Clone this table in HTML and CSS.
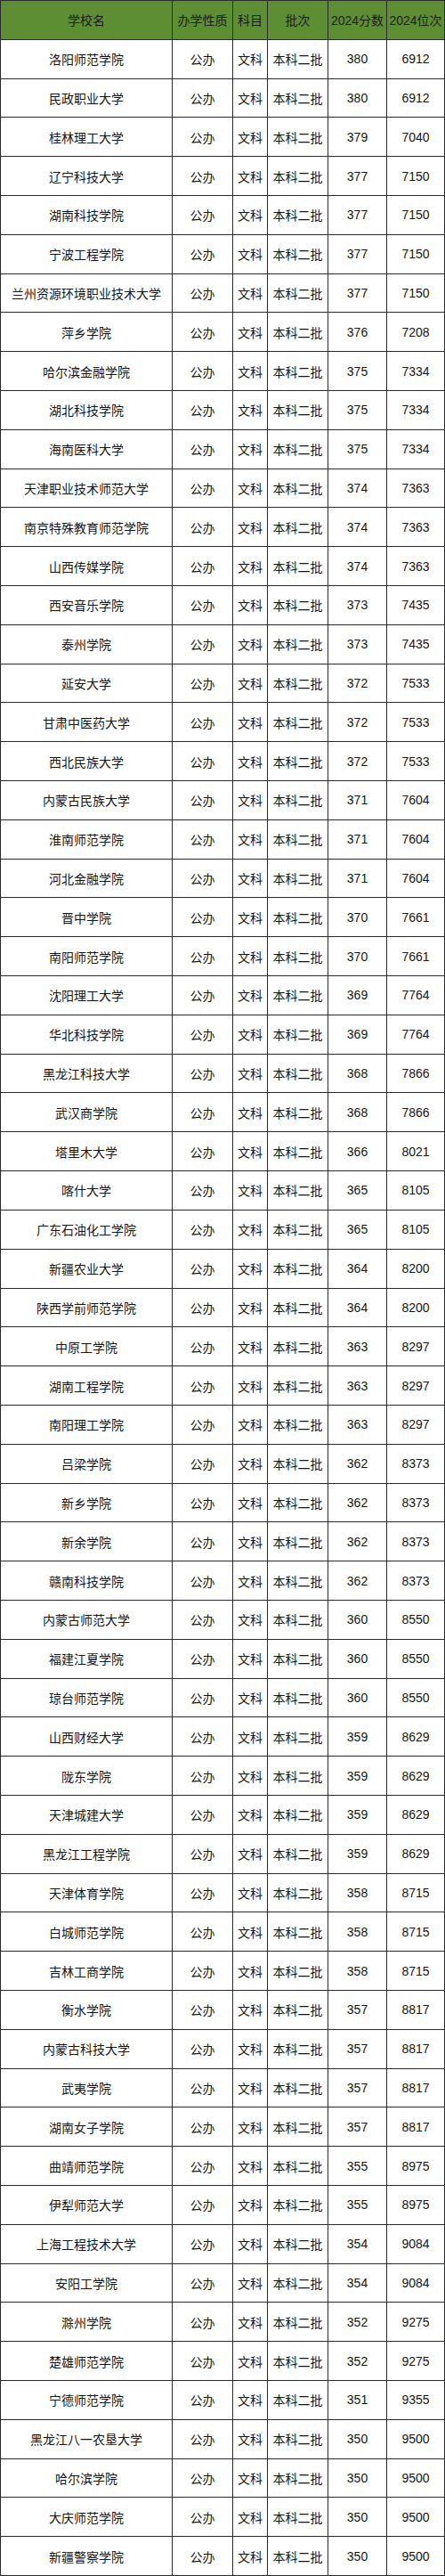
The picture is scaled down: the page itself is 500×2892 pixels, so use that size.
FILE: index.html
```html
<!DOCTYPE html>
<html lang="zh">
<head>
<meta charset="utf-8">
<title>2024 文科 本科二批</title>
<link rel="stylesheet" href="styles.css">
</head>
<body>
<div class="table">
<div class="c h">学校名</div><div class="c h">办学性质</div><div class="c h">科目</div><div class="c h">批次</div><div class="c h">2024分数</div><div class="c h">2024位次</div>
<div class="c">洛阳师范学院</div><div class="c">公办</div><div class="c">文科</div><div class="c">本科二批</div><div class="c n">380</div><div class="c n">6912</div>
<div class="c">民政职业大学</div><div class="c">公办</div><div class="c">文科</div><div class="c">本科二批</div><div class="c n">380</div><div class="c n">6912</div>
<div class="c">桂林理工大学</div><div class="c">公办</div><div class="c">文科</div><div class="c">本科二批</div><div class="c n">379</div><div class="c n">7040</div>
<div class="c">辽宁科技大学</div><div class="c">公办</div><div class="c">文科</div><div class="c">本科二批</div><div class="c n">377</div><div class="c n">7150</div>
<div class="c">湖南科技学院</div><div class="c">公办</div><div class="c">文科</div><div class="c">本科二批</div><div class="c n">377</div><div class="c n">7150</div>
<div class="c">宁波工程学院</div><div class="c">公办</div><div class="c">文科</div><div class="c">本科二批</div><div class="c n">377</div><div class="c n">7150</div>
<div class="c">兰州资源环境职业技术大学</div><div class="c">公办</div><div class="c">文科</div><div class="c">本科二批</div><div class="c n">377</div><div class="c n">7150</div>
<div class="c">萍乡学院</div><div class="c">公办</div><div class="c">文科</div><div class="c">本科二批</div><div class="c n">376</div><div class="c n">7208</div>
<div class="c">哈尔滨金融学院</div><div class="c">公办</div><div class="c">文科</div><div class="c">本科二批</div><div class="c n">375</div><div class="c n">7334</div>
<div class="c">湖北科技学院</div><div class="c">公办</div><div class="c">文科</div><div class="c">本科二批</div><div class="c n">375</div><div class="c n">7334</div>
<div class="c">海南医科大学</div><div class="c">公办</div><div class="c">文科</div><div class="c">本科二批</div><div class="c n">375</div><div class="c n">7334</div>
<div class="c">天津职业技术师范大学</div><div class="c">公办</div><div class="c">文科</div><div class="c">本科二批</div><div class="c n">374</div><div class="c n">7363</div>
<div class="c">南京特殊教育师范学院</div><div class="c">公办</div><div class="c">文科</div><div class="c">本科二批</div><div class="c n">374</div><div class="c n">7363</div>
<div class="c">山西传媒学院</div><div class="c">公办</div><div class="c">文科</div><div class="c">本科二批</div><div class="c n">374</div><div class="c n">7363</div>
<div class="c">西安音乐学院</div><div class="c">公办</div><div class="c">文科</div><div class="c">本科二批</div><div class="c n">373</div><div class="c n">7435</div>
<div class="c">泰州学院</div><div class="c">公办</div><div class="c">文科</div><div class="c">本科二批</div><div class="c n">373</div><div class="c n">7435</div>
<div class="c">延安大学</div><div class="c">公办</div><div class="c">文科</div><div class="c">本科二批</div><div class="c n">372</div><div class="c n">7533</div>
<div class="c">甘肃中医药大学</div><div class="c">公办</div><div class="c">文科</div><div class="c">本科二批</div><div class="c n">372</div><div class="c n">7533</div>
<div class="c">西北民族大学</div><div class="c">公办</div><div class="c">文科</div><div class="c">本科二批</div><div class="c n">372</div><div class="c n">7533</div>
<div class="c">内蒙古民族大学</div><div class="c">公办</div><div class="c">文科</div><div class="c">本科二批</div><div class="c n">371</div><div class="c n">7604</div>
<div class="c">淮南师范学院</div><div class="c">公办</div><div class="c">文科</div><div class="c">本科二批</div><div class="c n">371</div><div class="c n">7604</div>
<div class="c">河北金融学院</div><div class="c">公办</div><div class="c">文科</div><div class="c">本科二批</div><div class="c n">371</div><div class="c n">7604</div>
<div class="c">晋中学院</div><div class="c">公办</div><div class="c">文科</div><div class="c">本科二批</div><div class="c n">370</div><div class="c n">7661</div>
<div class="c">南阳师范学院</div><div class="c">公办</div><div class="c">文科</div><div class="c">本科二批</div><div class="c n">370</div><div class="c n">7661</div>
<div class="c">沈阳理工大学</div><div class="c">公办</div><div class="c">文科</div><div class="c">本科二批</div><div class="c n">369</div><div class="c n">7764</div>
<div class="c">华北科技学院</div><div class="c">公办</div><div class="c">文科</div><div class="c">本科二批</div><div class="c n">369</div><div class="c n">7764</div>
<div class="c">黑龙江科技大学</div><div class="c">公办</div><div class="c">文科</div><div class="c">本科二批</div><div class="c n">368</div><div class="c n">7866</div>
<div class="c">武汉商学院</div><div class="c">公办</div><div class="c">文科</div><div class="c">本科二批</div><div class="c n">368</div><div class="c n">7866</div>
<div class="c">塔里木大学</div><div class="c">公办</div><div class="c">文科</div><div class="c">本科二批</div><div class="c n">366</div><div class="c n">8021</div>
<div class="c">喀什大学</div><div class="c">公办</div><div class="c">文科</div><div class="c">本科二批</div><div class="c n">365</div><div class="c n">8105</div>
<div class="c">广东石油化工学院</div><div class="c">公办</div><div class="c">文科</div><div class="c">本科二批</div><div class="c n">365</div><div class="c n">8105</div>
<div class="c">新疆农业大学</div><div class="c">公办</div><div class="c">文科</div><div class="c">本科二批</div><div class="c n">364</div><div class="c n">8200</div>
<div class="c">陕西学前师范学院</div><div class="c">公办</div><div class="c">文科</div><div class="c">本科二批</div><div class="c n">364</div><div class="c n">8200</div>
<div class="c">中原工学院</div><div class="c">公办</div><div class="c">文科</div><div class="c">本科二批</div><div class="c n">363</div><div class="c n">8297</div>
<div class="c">湖南工程学院</div><div class="c">公办</div><div class="c">文科</div><div class="c">本科二批</div><div class="c n">363</div><div class="c n">8297</div>
<div class="c">南阳理工学院</div><div class="c">公办</div><div class="c">文科</div><div class="c">本科二批</div><div class="c n">363</div><div class="c n">8297</div>
<div class="c">吕梁学院</div><div class="c">公办</div><div class="c">文科</div><div class="c">本科二批</div><div class="c n">362</div><div class="c n">8373</div>
<div class="c">新乡学院</div><div class="c">公办</div><div class="c">文科</div><div class="c">本科二批</div><div class="c n">362</div><div class="c n">8373</div>
<div class="c">新余学院</div><div class="c">公办</div><div class="c">文科</div><div class="c">本科二批</div><div class="c n">362</div><div class="c n">8373</div>
<div class="c">赣南科技学院</div><div class="c">公办</div><div class="c">文科</div><div class="c">本科二批</div><div class="c n">362</div><div class="c n">8373</div>
<div class="c">内蒙古师范大学</div><div class="c">公办</div><div class="c">文科</div><div class="c">本科二批</div><div class="c n">360</div><div class="c n">8550</div>
<div class="c">福建江夏学院</div><div class="c">公办</div><div class="c">文科</div><div class="c">本科二批</div><div class="c n">360</div><div class="c n">8550</div>
<div class="c">琼台师范学院</div><div class="c">公办</div><div class="c">文科</div><div class="c">本科二批</div><div class="c n">360</div><div class="c n">8550</div>
<div class="c">山西财经大学</div><div class="c">公办</div><div class="c">文科</div><div class="c">本科二批</div><div class="c n">359</div><div class="c n">8629</div>
<div class="c">陇东学院</div><div class="c">公办</div><div class="c">文科</div><div class="c">本科二批</div><div class="c n">359</div><div class="c n">8629</div>
<div class="c">天津城建大学</div><div class="c">公办</div><div class="c">文科</div><div class="c">本科二批</div><div class="c n">359</div><div class="c n">8629</div>
<div class="c">黑龙江工程学院</div><div class="c">公办</div><div class="c">文科</div><div class="c">本科二批</div><div class="c n">359</div><div class="c n">8629</div>
<div class="c">天津体育学院</div><div class="c">公办</div><div class="c">文科</div><div class="c">本科二批</div><div class="c n">358</div><div class="c n">8715</div>
<div class="c">白城师范学院</div><div class="c">公办</div><div class="c">文科</div><div class="c">本科二批</div><div class="c n">358</div><div class="c n">8715</div>
<div class="c">吉林工商学院</div><div class="c">公办</div><div class="c">文科</div><div class="c">本科二批</div><div class="c n">358</div><div class="c n">8715</div>
<div class="c">衡水学院</div><div class="c">公办</div><div class="c">文科</div><div class="c">本科二批</div><div class="c n">357</div><div class="c n">8817</div>
<div class="c">内蒙古科技大学</div><div class="c">公办</div><div class="c">文科</div><div class="c">本科二批</div><div class="c n">357</div><div class="c n">8817</div>
<div class="c">武夷学院</div><div class="c">公办</div><div class="c">文科</div><div class="c">本科二批</div><div class="c n">357</div><div class="c n">8817</div>
<div class="c">湖南女子学院</div><div class="c">公办</div><div class="c">文科</div><div class="c">本科二批</div><div class="c n">357</div><div class="c n">8817</div>
<div class="c">曲靖师范学院</div><div class="c">公办</div><div class="c">文科</div><div class="c">本科二批</div><div class="c n">355</div><div class="c n">8975</div>
<div class="c">伊犁师范大学</div><div class="c">公办</div><div class="c">文科</div><div class="c">本科二批</div><div class="c n">355</div><div class="c n">8975</div>
<div class="c">上海工程技术大学</div><div class="c">公办</div><div class="c">文科</div><div class="c">本科二批</div><div class="c n">354</div><div class="c n">9084</div>
<div class="c">安阳工学院</div><div class="c">公办</div><div class="c">文科</div><div class="c">本科二批</div><div class="c n">354</div><div class="c n">9084</div>
<div class="c">滁州学院</div><div class="c">公办</div><div class="c">文科</div><div class="c">本科二批</div><div class="c n">352</div><div class="c n">9275</div>
<div class="c">楚雄师范学院</div><div class="c">公办</div><div class="c">文科</div><div class="c">本科二批</div><div class="c n">352</div><div class="c n">9275</div>
<div class="c">宁德师范学院</div><div class="c">公办</div><div class="c">文科</div><div class="c">本科二批</div><div class="c n">351</div><div class="c n">9355</div>
<div class="c">黑龙江八一农垦大学</div><div class="c">公办</div><div class="c">文科</div><div class="c">本科二批</div><div class="c n">350</div><div class="c n">9500</div>
<div class="c">哈尔滨学院</div><div class="c">公办</div><div class="c">文科</div><div class="c">本科二批</div><div class="c n">350</div><div class="c n">9500</div>
<div class="c">大庆师范学院</div><div class="c">公办</div><div class="c">文科</div><div class="c">本科二批</div><div class="c n">350</div><div class="c n">9500</div>
<div class="c">新疆警察学院</div><div class="c">公办</div><div class="c">文科</div><div class="c">本科二批</div><div class="c n">350</div><div class="c n">9500</div>
</div>
</body>
</html>
```
FILE: styles.css
```css
html, body {
  margin: 0;
  padding: 0;
  background: #ffffff;
}

.table {
  box-sizing: border-box;
  width: 500px;
  height: 2892px;
  display: grid;
  grid-template-columns: 193px 68px 39px 68px 66px 65px;
  grid-template-rows: repeat(66, 1fr);
  border-left: 1px solid #2a2a2a;
  border-top: 1px solid #2a2a2a;
  font-family: "Liberation Sans", "Noto Sans CJK SC", sans-serif;
  font-size: 14px;
  color: #151515;
}

.c {
  box-sizing: border-box;
  display: flex;
  align-items: center;
  justify-content: center;
  border-right: 1px solid #2a2a2a;
  border-bottom: 1px solid #2a2a2a;
  white-space: nowrap;
  overflow: hidden;
}

.h {
  background: #5e8e34;
  color: #1c1c1c;
}
```
